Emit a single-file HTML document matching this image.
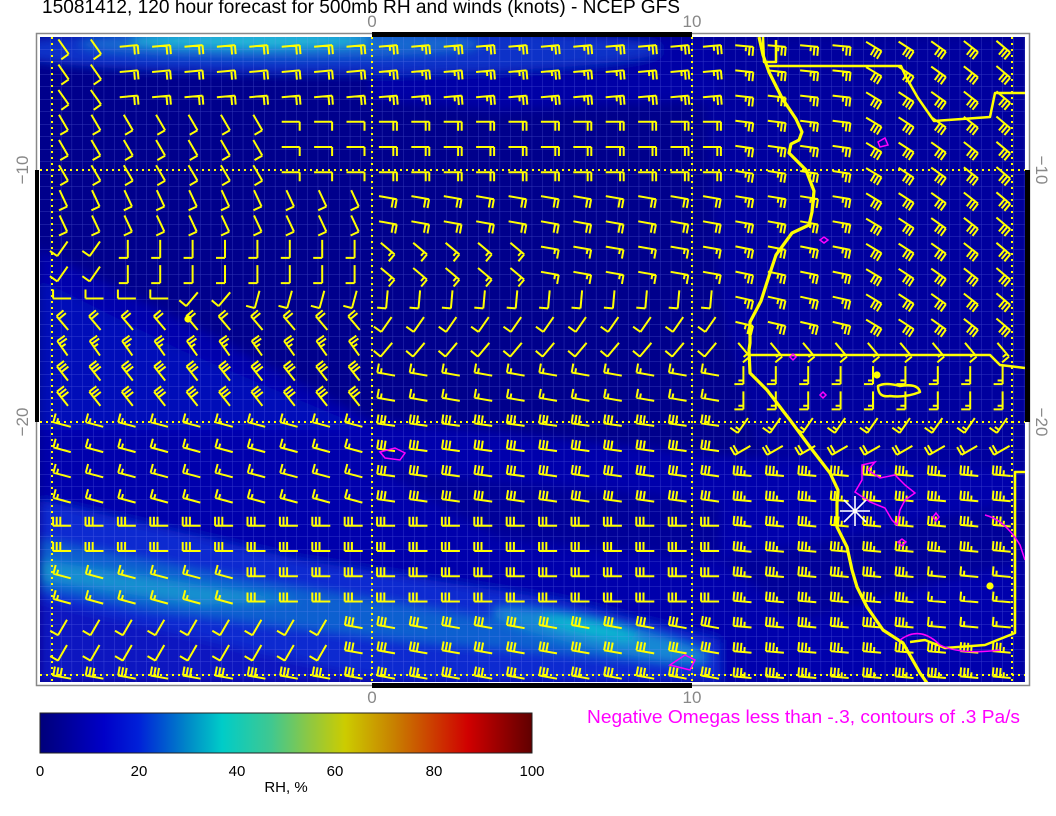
<!DOCTYPE html>
<html><head><meta charset="utf-8">
<style>
html,body{margin:0;padding:0;background:#fff;width:1056px;height:816px;overflow:hidden}
svg{display:block}
text{font-family:"Liberation Sans",sans-serif}
</style></head><body>
<svg id="s" width="1056" height="816" viewBox="0 0 1056 816" xmlns="http://www.w3.org/2000/svg">
<defs>
<clipPath id="mc"><rect x="40" y="37" width="985" height="645"/></clipPath>
<filter id="bl" x="-20%" y="-20%" width="140%" height="140%"><feGaussianBlur stdDeviation="5"/></filter>
<pattern id="gr" width="10.7" height="12.5" patternUnits="userSpaceOnUse" x="40" y="37">
<path d="M10.7 0V12.5M0 12.5H10.7" stroke="#8c96ff" stroke-opacity="0.35" stroke-width="1" fill="none"/>
</pattern>
<linearGradient id="cb" x1="0" x2="1" y1="0" y2="0">
<stop offset="0" stop-color="#00007a"/>
<stop offset="0.13" stop-color="#0000c8"/>
<stop offset="0.2" stop-color="#0020d8"/>
<stop offset="0.3" stop-color="#0088c8"/>
<stop offset="0.37" stop-color="#00ccc8"/>
<stop offset="0.47" stop-color="#40c890"/>
<stop offset="0.55" stop-color="#90c840"/>
<stop offset="0.62" stop-color="#cccc00"/>
<stop offset="0.72" stop-color="#c88000"/>
<stop offset="0.87" stop-color="#d00000"/>
<stop offset="1" stop-color="#600000"/>
</linearGradient>
</defs>
<text x="42" y="13" font-size="19" fill="#000" textLength="638" lengthAdjust="spacingAndGlyphs">15081412, 120 hour forecast for 500mb RH and winds (knots) - NCEP GFS</text>
<g clip-path="url(#mc)">
<rect x="40" y="37" width="985" height="645" fill="#00008c"/>
<g filter="url(#bl)">
<polygon points="40,250 200,330 370,420 720,455 1025,470 1025,682 40,682" fill="#0006ac"/>
<polygon points="700,37 1025,37 1025,470 760,455 720,300" fill="#00009e"/>
<polygon points="370,37 720,37 720,100 500,110 370,100" fill="#0000a6"/>
<polygon points="40,280 180,350 370,430 40,430" fill="#0010b8"/>
<ellipse cx="330" cy="50" rx="330" ry="24" fill="#0a30c8"/>
<ellipse cx="280" cy="44" rx="200" ry="14" fill="#1268d0"/>
<ellipse cx="250" cy="40" rx="120" ry="8" fill="#20b8d8"/>
<polygon points="40,500 300,560 560,600 720,640 720,682 40,682" fill="#0a2ad0"/>
<polygon points="40,540 250,580 500,620 700,650 700,665 400,640 150,610 40,590" fill="#1060d0"/>
<polygon points="40,560 200,585 300,600 200,605 40,580" fill="#1490d0"/>
<ellipse cx="600" cy="635" rx="110" ry="14" fill="#1888d4" transform="rotate(12 600 635)"/>
<ellipse cx="590" cy="628" rx="50" ry="7" fill="#10b8d0" transform="rotate(12 590 628)"/>
<polygon points="40,600 250,650 400,682 40,682" fill="#0812c0"/>
<polygon points="380,470 720,500 720,560 500,540" fill="#000098"/>
<polygon points="720,560 1025,500 1025,560 800,620" fill="#000098"/>
</g>
<rect x="40" y="37" width="985" height="645" fill="url(#gr)"/>
<g stroke="#ffff00" stroke-width="2" stroke-dasharray="2 4" fill="none">
<path d="M52 37V682M372 37V682M692 37V682M1012 37V682M40 170H1025M40 422H1025M40 675H1025"/>
</g>
<g id="barbs" stroke="#ffff00" stroke-width="2" fill="none" stroke-linecap="butt"></g>
<g stroke="#ffff00" stroke-width="3.2" fill="none" stroke-linejoin="round">
<polyline points="759,37 763,55 769,72 782,98 796,119 802,132 799,140 791,144 789,153 806,170 814,191 812,212 809,225 792,233 776,255 769,276 761,301 750,322 750,343 749,350 750,373 767,390 790,420 810,447 830,473 838,490 837,503 837,527 847,547 852,570 857,587 867,607 883,630 903,643 920,673 927,683"/>
<polyline points="763,37 764,62 776,62 776,40" stroke-width="2.5"/>
<polyline points="766,66 901,66 906,77 918,98 934,121 990,117 995,93 1025,93" stroke-width="2.5"/>
<polyline points="750,355 990,355 1000,365 1025,368" stroke-width="2.5"/>
<polyline points="1025,472 1015,472 1015,633 985,645 945,648 925,640 910,642" stroke-width="2.5"/>
<path d="M878 386 Q885 382 900 386 Q918 383 920 392 Q905 398 890 396 Q878 398 878 386Z" stroke-width="2.5"/>
<circle cx="877" cy="375" r="2" fill="#ff0"/>
<circle cx="188" cy="319" r="2" fill="#ff0"/>
<circle cx="990" cy="586" r="2" fill="#ff0"/>
</g>
<g stroke="#ff00ff" stroke-width="1.5" fill="none">
<path d="M862 465 L875 462 L868 470 L880 478 L895 475 L905 485 L915 493 L905 500 L900 510 L897 525 L892 520 L885 508 L870 502 L855 492 L862 480Z"/>
<path d="M985 515 Q1005 520 1020 545 L1025 560"/>
<path d="M380 452 L395 448 L405 453 L400 460 L385 458Z"/>
<path d="M670 665 L685 655 L695 660 L690 670Z"/>
<path d="M900 640 Q920 625 940 645 Q960 655 1000 650"/>
<path d="M878 142 L885 138 L888 145 L880 147Z"/>
<path d="M820 240 l4 -3 l4 3 l-4 3Z M790 357 l3 -3 l3 3 l-3 3Z M820 395 l3 -3 l3 3 l-3 3Z M933 517 l3 -4 l3 4 l-3 4Z M898 542 l4 -3 l4 3 l-4 4Z"/>
</g>
<g stroke="#fff" stroke-width="1.6">
<path d="M840 511H870M855 496V526M844 500L866 522M866 500L844 522"/>
</g>
</g>
<rect x="36.5" y="33.5" width="993" height="652" fill="none" stroke="#888" stroke-width="1.5"/>
<rect x="372" y="32" width="320" height="5" fill="#000"/>
<rect x="372" y="683" width="320" height="5" fill="#000"/>
<rect x="35" y="170" width="4" height="252" fill="#000"/>
<rect x="1025" y="170" width="5" height="252" fill="#000"/>
<g fill="#888" font-size="17">
<text x="372" y="27" text-anchor="middle">0</text>
<text x="692" y="27" text-anchor="middle">10</text>
<text x="372" y="703" text-anchor="middle">0</text>
<text x="692" y="703" text-anchor="middle">10</text>
<text transform="translate(28 170) rotate(-90)" text-anchor="middle">−10</text>
<text transform="translate(28 422) rotate(-90)" text-anchor="middle">−20</text>
<text transform="translate(1036 170) rotate(90)" text-anchor="middle">−10</text>
<text transform="translate(1036 422) rotate(90)" text-anchor="middle">−20</text>
</g>
<rect x="40" y="713" width="492" height="40" fill="url(#cb)" stroke="#222" stroke-width="1"/>
<g fill="#000" font-size="15" text-anchor="middle">
<text x="40" y="776">0</text><text x="139" y="776">20</text><text x="237" y="776">40</text>
<text x="335" y="776">60</text><text x="434" y="776">80</text><text x="532" y="776">100</text>
<text x="286" y="792">RH, %</text>
</g>
<text x="587" y="723" font-size="18" fill="#ff00ff" textLength="433" lengthAdjust="spacingAndGlyphs">Negative Omegas less than -.3, contours of .3 Pa/s</text>
</svg>
<script>
(function(){
var g=document.getElementById('barbs');var d='';
function f(x,y){
 if(x>720){
  if(y<335){ if(x<860) return [5+(y-46)*0.03,2.5]; return [30+(x-860)*0.07,3];}
  if(y<360) return [50,1.5];
  if(y<405) return [90,1.5];
  if(y<435) return [125,1.5];
  if(y<475) return [150,2];
  if(x>930&&y>560&&y<640) return [185,1.5];
  return [185,3.5];
 }
 if(y<110){ if(x<110) return [55,1]; return [-5,x>370?2.5:2]; }
 if(y<185){ if(x<270) return [60,1]; return [0, x>370?2:1]; }
 if(y<240){ if(x<370) return [65,1]; return [10,2]; }
 if(y<290){ if(x<120) return [125,1]; if(x<370) return [90,1]; return [x<520?40:10,1.5]; }
 if(y<310){ if(x<170) return [180,1]; if(x<240) return [130,1]; if(x<370) return [105,1]; return [95,1]; }
 if(y<335){ if(x<370) return [230,2]; return [125,1]; }
 if(y<360){ if(x<370) return [235,2.5]; return [130,1]; }
 if(y<412){ if(x<370) return [232,3]; return [190,1.5]; }
 if(y<510){ if(x<370) return [195,1.5]; return [188,3]; }
 if(y<555) return [180,3];
 if(y<610){ if(x<230) return [195,1.5]; return [180,3]; }
 if(y<665){ if(x<340) return [120,1]; return [190,3]; }
 return [190,3];
}
for(var r=0;r<26;r++){var y=46+r*25.25;
 for(var c=0;c<30;c++){var x=63+c*32.4;
  var v=f(x,y),a=v[0]*Math.PI/180,n=v[1];
  var L=18,sx=x-0.45*L*Math.cos(a),sy=y-0.45*L*Math.sin(a);
  var ex=sx+L*Math.cos(a),ey=sy+L*Math.sin(a);
  d+='M'+sx.toFixed(1)+' '+sy.toFixed(1)+'L'+ex.toFixed(1)+' '+ey.toFixed(1);
  var b=a+Math.PI/2,k=0;
  while(n>0){var len=n>=1?9:5;
   var px=ex-k*3.6*Math.cos(a),py=ey-k*3.6*Math.sin(a);
   d+='M'+px.toFixed(1)+' '+py.toFixed(1)+'l'+(len*Math.cos(b)).toFixed(1)+' '+(len*Math.sin(b)).toFixed(1);
   n-=1;k++;}
 }}
var p=document.createElementNS('http://www.w3.org/2000/svg','path');p.setAttribute('d',d);g.appendChild(p);
})();
</script>
</body></html>
